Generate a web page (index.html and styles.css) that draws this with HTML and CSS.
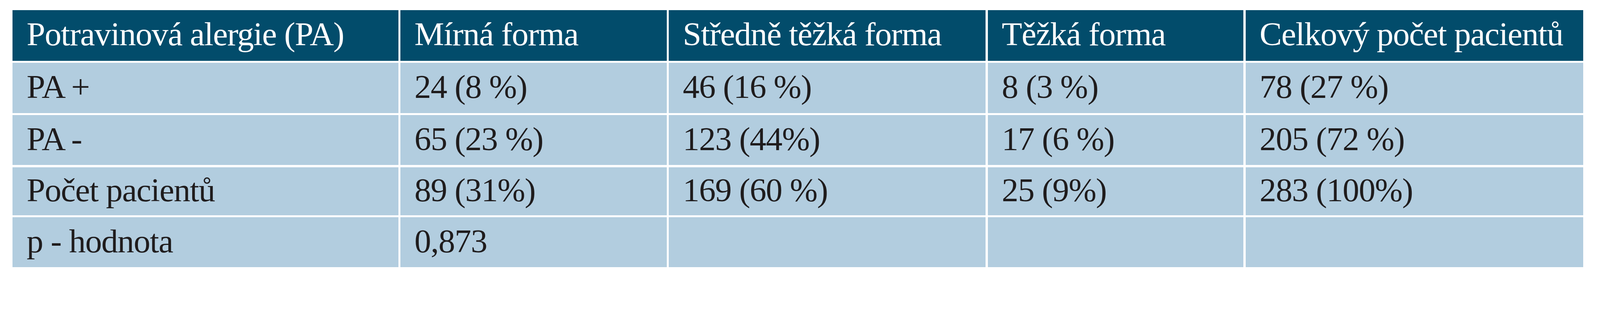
FILE: index.html
```html
<!DOCTYPE html>
<html lang="cs">
<head>
<meta charset="utf-8">
<title>Potravinová alergie</title>
<link rel="stylesheet" href="styles.css">
</head>
<body>
<div class="page">
  <div class="grid">
    <div class="cell head">Potravinová alergie (PA)</div>
    <div class="cell head">Mírná forma</div>
    <div class="cell head">Středně těžká forma</div>
    <div class="cell head">Těžká forma</div>
    <div class="cell head">Celkový počet pacientů</div>

    <div class="cell">PA +</div>
    <div class="cell">24 (8 %)</div>
    <div class="cell">46 (16 %)</div>
    <div class="cell">8 (3 %)</div>
    <div class="cell">78 (27 %)</div>

    <div class="cell">PA -</div>
    <div class="cell">65 (23 %)</div>
    <div class="cell">123 (44%)</div>
    <div class="cell">17 (6 %)</div>
    <div class="cell">205 (72 %)</div>

    <div class="cell">Počet pacientů</div>
    <div class="cell">89 (31%)</div>
    <div class="cell">169 (60 %)</div>
    <div class="cell">25 (9%)</div>
    <div class="cell">283 (100%)</div>

    <div class="cell">p - hodnota</div>
    <div class="cell">0,873</div>
    <div class="cell"></div>
    <div class="cell"></div>
    <div class="cell"></div>
  </div>
</div>
</body>
</html>
```

FILE: styles.css
```css
:root {
  /* one reference pixel: the layout scales with the window width */
  --u: calc(100vw / 4555);
}

html, body {
  margin: 0;
  padding: 0;
  background: #ffffff;
  overflow: hidden;
}

.page {
  padding: calc(29 * var(--u)) 0 0 calc(36 * var(--u));
}

.grid {
  display: grid;
  grid-template-columns:
    calc(1098 * var(--u))
    calc(758 * var(--u))
    calc(902 * var(--u))
    calc(728 * var(--u))
    calc(961 * var(--u));
  grid-template-rows:
    calc(144 * var(--u))
    calc(143 * var(--u))
    calc(143 * var(--u))
    calc(137 * var(--u))
    calc(142 * var(--u));
  gap: calc(6 * var(--u));
  width: max-content;
  background: #ffffff;
}

.cell {
  display: flex;
  align-items: center;
  padding: 0 0 calc(6 * var(--u)) calc(40 * var(--u));
  background: #b2cddf;
  color: #1f1c1d;
  font-family: "Liberation Serif", "Times New Roman", serif;
  font-size: calc(95 * var(--u));
  letter-spacing: calc(-1.5 * var(--u));
  white-space: nowrap;
  line-height: 1;
}

.head {
  background: #024c6b;
  color: #ffffff;
}
```
